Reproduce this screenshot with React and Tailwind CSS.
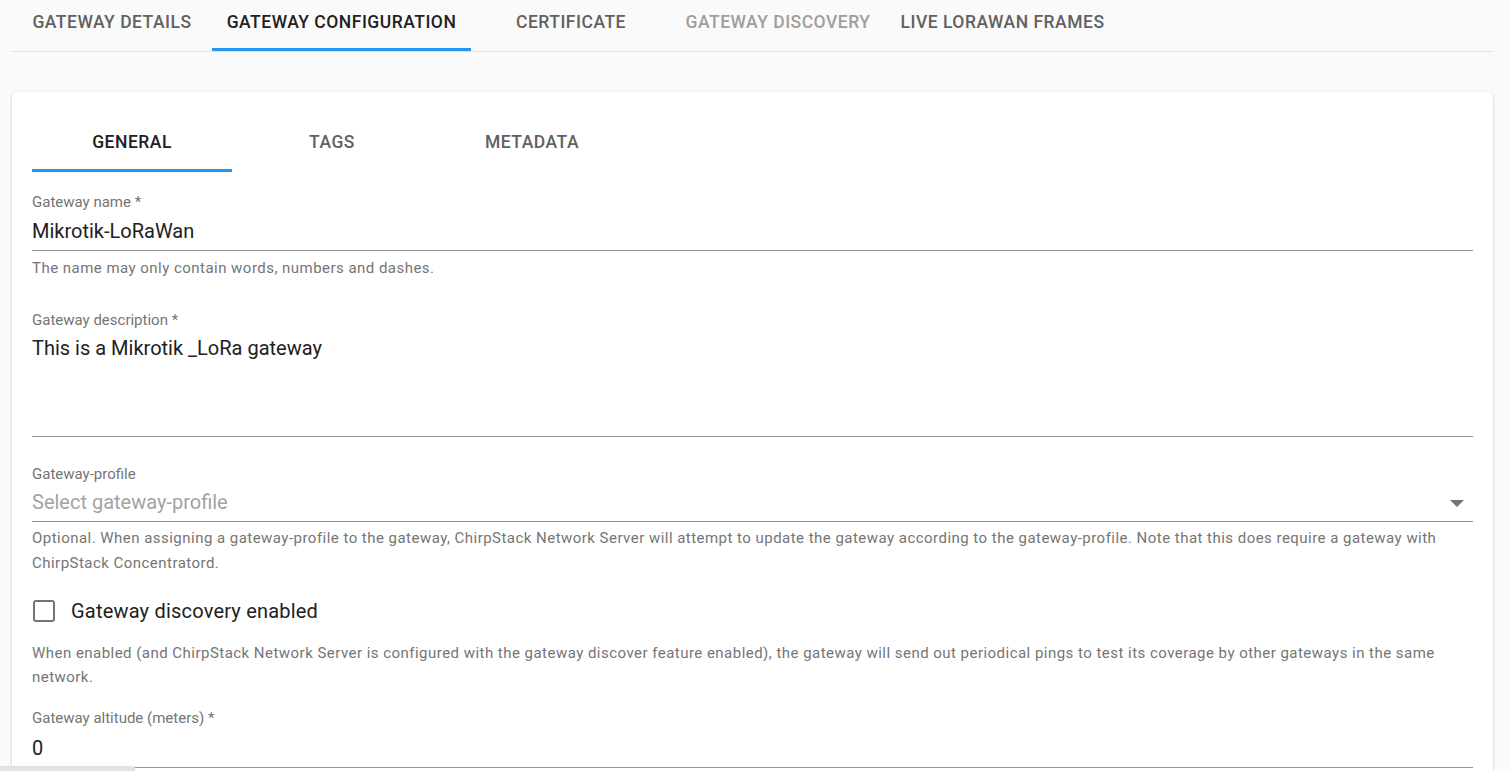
import React from "react";

const topTabs = [
  { label: "GATEWAY DETAILS", w: "w-[200px]", cls: "text-[#616161]" },
  { label: "GATEWAY CONFIGURATION", w: "w-[259px]", cls: "text-[#212121]", active: true },
  { label: "CERTIFICATE", w: "w-[200px]", cls: "text-[#616161]" },
  { label: "GATEWAY DISCOVERY", w: "w-[214px]", cls: "text-[#9e9e9e]" },
  { label: "LIVE LORAWAN FRAMES", w: "w-[235px]", cls: "text-[#616161]" },
];

const innerTabs = [
  { label: "GENERAL", active: true },
  { label: "TAGS" },
  { label: "METADATA" },
];

function Label({ children, className = "" }) {
  return (
    <div className={"text-[15px] leading-[18px] text-[#757575] " + className}>{children}</div>
  );
}

export default function App() {
  return (
    <div
      className="min-h-[771px] bg-[#fafafa] px-[12px] relative overflow-hidden"
      style={{ fontFamily: "Roboto, 'Liberation Sans', sans-serif" }}
    >
      {/* top tabs */}
      <div className="flex border-b border-[#e0e0e0] w-[1481px]">
        {topTabs.map((t) => (
          <div
            key={t.label}
            className={
              "relative h-[51px] pb-[7px] flex items-center justify-center shrink-0 text-[17.5px] font-medium tracking-[0.5px] " +
              t.w +
              " " +
              t.cls
            }
          >
            {t.label}
            {t.active && (
              <div className="absolute left-0 right-0 bottom-0 h-[3px] bg-[#2196f3]" />
            )}
          </div>
        ))}
      </div>

      {/* card */}
      <div className="mt-[40px] w-[1481px] bg-white rounded-[5px] shadow-[0_1px_3px_rgba(0,0,0,0.2),0_1px_1px_rgba(0,0,0,0.14),0_2px_1px_-1px_rgba(0,0,0,0.12)] px-[20px] pt-[20px] pb-[40px]">
        {/* inner tabs */}
        <div className="flex">
          {innerTabs.map((t) => (
            <div
              key={t.label}
              className={
                "relative w-[200px] h-[60px] flex items-center justify-center text-[17.5px] font-medium tracking-[0.5px] " +
                (t.active ? "text-[#212121]" : "text-[#616161]")
              }
            >
              {t.label}
              {t.active && (
                <div className="absolute left-0 right-0 bottom-0 h-[3px] bg-[#2196f3]" />
              )}
            </div>
          ))}
        </div>

        {/* Gateway name */}
        <Label className="mt-[21px]">Gateway name *</Label>
        <div className="mt-[8px] border-b border-[#949494] pb-[7px] text-[20px] leading-[24px] text-[#212121]">
          Mikrotik-LoRaWan
        </div>
        <div className="mt-[8px] text-[15px] leading-[18px] tracking-[0.47px] text-[#757575]">
          The name may only contain words, numbers and dashes.
        </div>

        {/* Gateway description */}
        <Label className="mt-[34px]">Gateway description *</Label>
        <div className="mt-[7px] h-[101px] border-b border-[#949494] text-[20px] leading-[24px] text-[#212121]">
          This is a Mikrotik _LoRa gateway
        </div>

        {/* Gateway profile */}
        <Label className="mt-[28px]">Gateway-profile</Label>
        <div className="mt-[7px] border-b border-[#949494] pb-[7px] flex items-center justify-between">
          <span className="text-[20px] leading-[24px] text-[#a3a3a3]">Select gateway-profile</span>
          <svg width="14" height="7" viewBox="0 0 14 7" className="mr-[9px] mt-[2px]">
            <path d="M0 0 L14 0 L7 7 Z" fill="#757575" />
          </svg>
        </div>
        <div className="mt-[4px] text-[15px] leading-[25px] tracking-[0.47px] text-[#757575]">
          <div className="whitespace-nowrap">
            Optional. When assigning a gateway-profile to the gateway, ChirpStack Network Server will attempt to update the gateway according to the gateway-profile. Note that this does require a gateway with
          </div>
          <div className="whitespace-nowrap">ChirpStack Concentratord.</div>
        </div>

        {/* checkbox */}
        <div className="mt-[24px] flex items-center h-[22px]">
          <div className="w-[22px] h-[22px] ml-[1px] rounded-[3px] border-[2.5px] border-[#757575] box-border" />
          <span className="ml-[16px] text-[20px] leading-[24px] tracking-[0.2px] text-[#212121]">
            Gateway discovery enabled
          </span>
        </div>
        <div className="mt-[19px] text-[15px] leading-[24px] tracking-[0.47px] text-[#757575]">
          <div className="whitespace-nowrap">
            When enabled (and ChirpStack Network Server is configured with the gateway discover feature enabled), the gateway will send out periodical pings to test its coverage by other gateways in the same
          </div>
          <div className="whitespace-nowrap">network.</div>
        </div>

        {/* altitude */}
        <Label className="mt-[20px]">Gateway altitude (meters) *</Label>
        <div className="mt-[9px] border-b border-[#949494] pb-[7px] text-[20px] leading-[24px] text-[#212121]">
          0
        </div>
      </div>

      {/* scrollbar remnant */}
      <div className="fixed left-0 bottom-0 w-[135px] h-[5px] bg-[#e2e2e2]" />
    </div>
  );
}
